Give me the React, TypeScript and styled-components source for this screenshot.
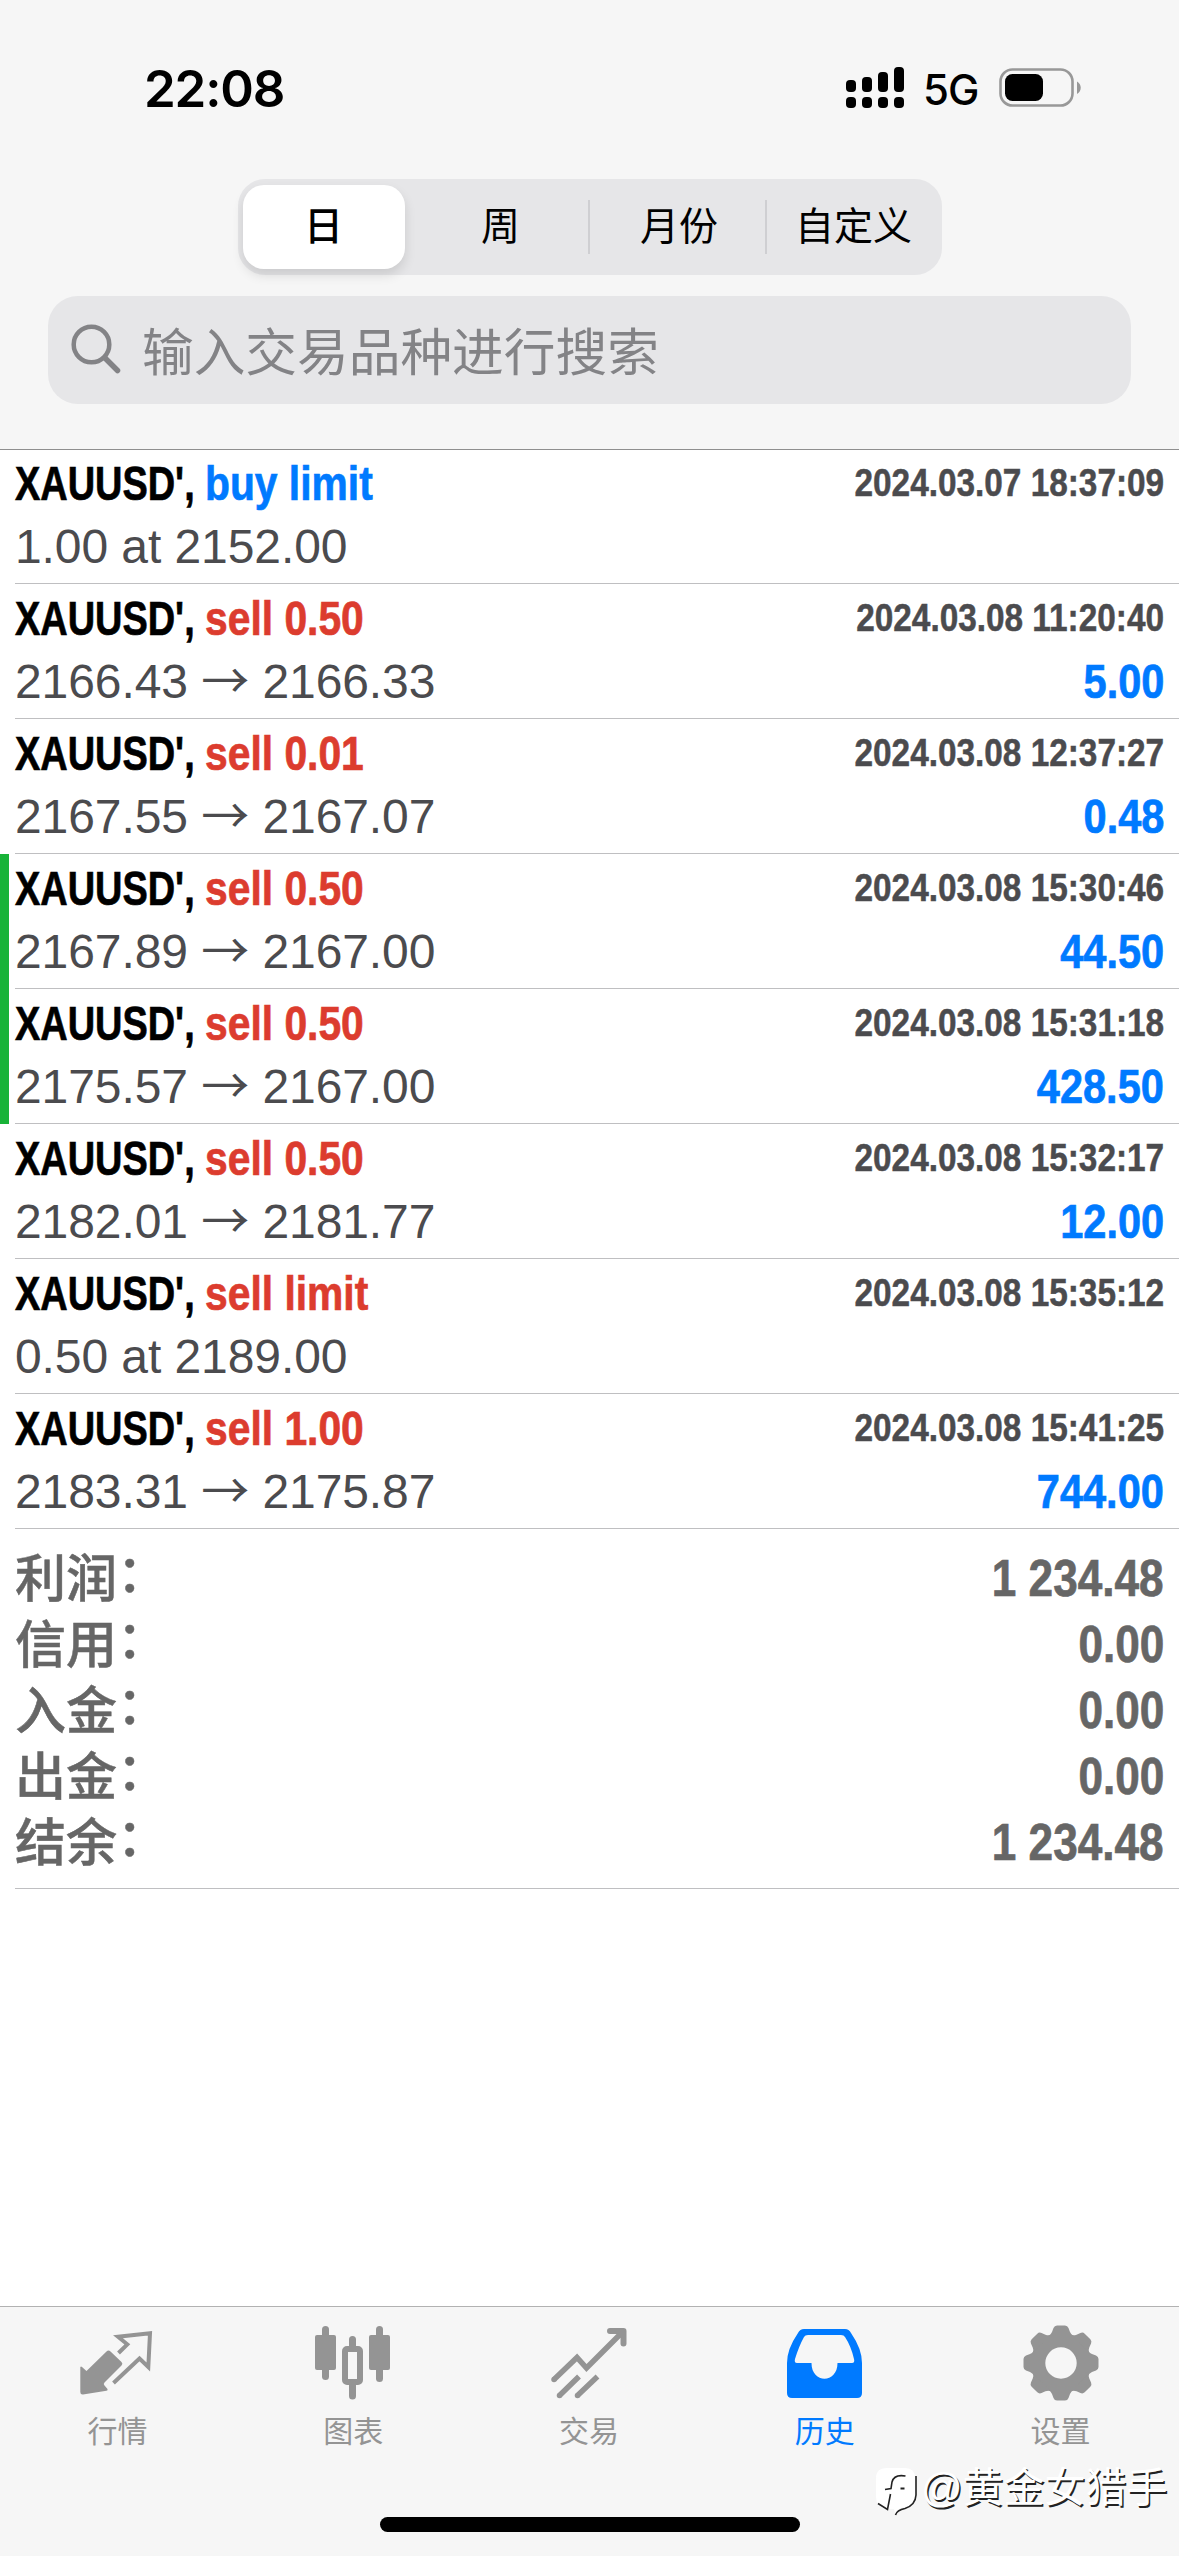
import React from "react";
import styled, { createGlobalStyle } from "styled-components";

const SANS = '"Liberation Sans", "Noto Sans CJK SC", sans-serif';
const CJK = '"Noto Sans CJK SC", sans-serif';

const GlobalStyle = createGlobalStyle`
  * { box-sizing: border-box; }
  body { margin: 0; background: #fff; }
`;

const Screen = styled.div`
  width: 1179px;
  height: 2556px;
  display: flex;
  flex-direction: column;
  background: #fff;
  font-family: ${SANS};
  position: relative;
  overflow: hidden;
`;

const Header = styled.header`
  height: 450px;
  flex: none;
  display: flex;
  flex-direction: column;
  align-items: center;
  background: #f6f6f6;
  border-bottom: 1px solid #8f8f8f;
`;

const StatusBar = styled.div`
  width: 100%;
  height: 179px;
  flex: none;
  display: flex;
  justify-content: space-between;
  padding: 56px 97px 0 144px;
`;

const Clock = styled.div`
  font: 600 51px/65px Inter, sans-serif;
  letter-spacing: -1.2px;
  color: #000;
`;

const StatusIcons = styled.div`
  display: flex;
  height: 64px;
  align-items: flex-start;
`;

const Network = styled.span`
  width: 95px;
  font: 500 42px/68px Inter, sans-serif;
  letter-spacing: -1px;
  padding-left: 19px;
`;

const Segments = styled.div`
  width: 704px;
  height: 96px;
  flex: none;
  display: flex;
  align-items: center;
  padding: 0 6px 0 5px;
  border-radius: 27px;
  background: #e6e6e8;
`;

const Segment = styled.div<{ $width: number; $shift?: number; $active?: boolean; $divider?: boolean }>`
  width: ${(p) => p.$width}px;
  height: ${(p) => (p.$active ? 84 : 54)}px;
  display: flex;
  align-items: center;
  justify-content: center;
  padding-left: ${(p) => p.$shift ?? 0}px;
  font: ${(p) => (p.$active ? 500 : 400)} 39px/48px ${SANS};
  color: #000;
  border-radius: ${(p) => (p.$active ? 21 : 0)}px;
  background: ${(p) => (p.$active ? "#fff" : "transparent")};
  box-shadow: ${(p) => (p.$active ? "0 6px 12px rgba(0,0,0,.12)" : "none")};
  border-right: ${(p) => (p.$divider ? "2px solid #cfcfd2" : "none")};
`;

const SearchField = styled.div`
  width: 1083px;
  height: 108px;
  margin-top: 21px;
  display: flex;
  align-items: center;
  gap: 19px;
  padding: 0 0 2px 23px;
  border-radius: 30px;
  background: #e6e6e8;
  color: #838386;
  font: 400 51.7px/72px ${CJK};
  svg { position: relative; top: 1px; }
`;

const Deals = styled.main`
  display: flex;
  flex-direction: column;
  flex: 1;
`;

const DealRow = styled.article<{ $marked?: boolean }>`
  height: 135px;
  display: flex;
  border-left: 9px solid ${(p) => (p.$marked ? "#18b338" : "transparent")};
  &:first-child { height: 134px; }
  &:first-child > div { padding-top: 2px; }
`;

const DealBody = styled.div`
  flex: 1;
  margin-left: 6px;
  padding: 3px 15px 0 0;
  border-bottom: 1px solid #bfbfc1;
`;

const Line = styled.div`
  height: 63px;
  display: flex;
  justify-content: space-between;
  line-height: 63px;
  white-space: pre;
`;

const Title = styled.div`
  display: flex;
  font-size: 48px;
  font-weight: 700;
  -webkit-text-stroke: 0.7px currentColor;
`;

const Symbol = styled.span`
  width: 190px;
  color: #000;
  transform: scaleX(0.79);
  transform-origin: left;
`;

const Action = styled.span<{ $buy?: boolean }>`
  color: ${(p) => (p.$buy ? "#007aff" : "#dc3c2e")};
  transform: scaleX(0.85);
  transform-origin: left;
`;

const Stamp = styled.span`
  font-size: 39px;
  font-weight: 700;
  line-height: 62px;
  color: #4b4b4e;
  -webkit-text-stroke: 0.5px currentColor;
  transform: scaleX(0.855);
  transform-origin: right;
`;

const Prices = styled.span`
  font-size: 48px;
  letter-spacing: -0.08px;
  color: #4b4b4e;
`;

const Arrow = styled.span`
  font-family: ${CJK};
  line-height: 0;
`;

const Profit = styled.span`
  font-size: 48px;
  font-weight: 700;
  color: #007aff;
  -webkit-text-stroke: 0.7px currentColor;
  transform: scaleX(0.865);
  transform-origin: right;
`;

const Summary = styled.section`
  height: 360px;
  margin-left: 15px;
  padding: 17px 15px 0 0;
  border-bottom: 1px solid #bfbfc1;
`;

const SummaryLine = styled.div`
  height: 66px;
  display: flex;
  justify-content: space-between;
  font-size: 51px;
  line-height: 66px;
  color: #666;
`;

const SummaryLabel = styled.span`
  font-weight: 500;
  line-height: 68px;
  -webkit-text-stroke: 0.5px currentColor;
`;

const Colon = styled.span`
  vertical-align: 5px;
  line-height: 0;
`;

const SummaryValue = styled.span`
  font-weight: 700;
  -webkit-text-stroke: 0.7px currentColor;
  transform: scaleX(0.865);
  transform-origin: right;
`;

const TabBar = styled.nav`
  height: 250px;
  flex: none;
  display: grid;
  grid-template-columns: repeat(5, 1fr);
  background: #f6f6f6;
  border-top: 1px solid #b2b2b2;
`;

const Tab = styled.div<{ $active?: boolean }>`
  display: flex;
  flex-direction: column;
  align-items: center;
  padding: 18px 1px 0 0;
  color: ${(p) => (p.$active ? "#007aff" : "#949494")};
  font: 400 30px/40px ${SANS};
  svg { display: block; margin-bottom: 11px; }
`;

const HomeIndicator = styled.div`
  position: absolute;
  left: 380px;
  bottom: 24px;
  width: 420px;
  height: 15px;
  border-radius: 8px;
  background: #000;
`;

const Watermark = styled.div`
  position: absolute;
  left: 874px;
  top: 2465px;
  display: flex;
  align-items: flex-start;
  gap: 2px;
  color: #fff;
  font: 400 41px/47px ${SANS};
  text-shadow: 1.5px 1.5px 0 #222;
`;

const SignalIcon = () => (
  <svg width="58" height="64" viewBox="0 0 58 64">
    {[0, 1, 2, 3].map((i) => {
      const top = [24, 21, 16, 11][i];
      return (
        <g key={i}>
          <rect x={i * 16} y={top} width="10" height={36 - top} rx="4" />
          <rect x={i * 16} y="41" width="10" height="11" rx="4" />
        </g>
      );
    })}
  </svg>
);

const BatteryIcon = () => (
  <svg width="83" height="64" viewBox="0 0 83 64">
    <rect x="1.5" y="13.5" width="72" height="36" rx="12" fill="none" stroke="#989898" strokeWidth="2.6" />
    <rect x="6" y="18" width="38" height="27" rx="7.5" />
    <path d="M78 25.5c5 2.5 5 10 0 12.5z" fill="#989898" />
  </svg>
);

const SearchIcon = () => (
  <svg width="52" height="52" viewBox="0 0 52 52" fill="none" stroke="#838386" strokeWidth="4.500" strokeLinecap="round">
    <circle cx="20.500" cy="20.500" r="17.800" />
    <path d="M34 34 46.500 46.500" strokeWidth="5.500" />
  </svg>
);

const QuotesIcon = () => (
  <svg width="76" height="76" viewBox="0 0 76 76">
    <path
      d="M1.300 42Q2 41 3 42L7.500 46 27.500 26.500Q29.500 24.500 31.500 26.500L42.500 37Q44.300 38.800 42.500 40.500L25.500 57.500Q24 59 25.500 60.500L28.500 64Q29 65.500 27.500 65.700L4 69.500Q1.300 69.700 1.300 67Z"
      fill="currentColor"
    />
    <path
      d="M39.500 28 48.300 19.300 39 11.700 71 8.300 69.300 42 60.500 33.500 34.500 58"
      fill="none"
      stroke="currentColor"
      strokeWidth="4"
    />
  </svg>
);

const ChartIcon = () => (
  <svg width="76" height="76" viewBox="0 0 76 76" fill="currentColor">
    <rect x="0" y="10" width="21" height="35" rx="2" />
    <rect x="7" y="1" width="7" height="54" rx="3.500" />
    <rect x="54" y="10" width="21" height="35" rx="2" />
    <rect x="61" y="1" width="7" height="56" rx="3.500" />
    <rect x="30" y="24" width="15" height="33" rx="2" fill="none" stroke="currentColor" strokeWidth="6" />
    <path d="M37.500 14.500v8M37.500 58v13" stroke="currentColor" strokeWidth="7" strokeLinecap="round" />
  </svg>
);

const TradeIcon = () => (
  <svg width="76" height="76" viewBox="0 0 76 76" fill="none" stroke="currentColor" strokeWidth="5.500" strokeLinejoin="miter">
    <path d="M3 54.500 26 32.500 35.500 43 72 6.500" />
    <path d="M59 6H72.500V18.500" strokeLinecap="round" strokeLinejoin="round" strokeWidth="6" />
    <path d="M64 7H72V15Z" fill="currentColor" stroke="none" />
    <path d="M8.500 70.500 28 51.500M26.500 70.500 46.500 51.500" />
    <g fill="currentColor" stroke="none">
      <circle cx="3" cy="54.500" r="2.750" />
      <circle cx="8.500" cy="70.500" r="2.750" />
      <circle cx="26.500" cy="70.500" r="2.750" />
    </g>
  </svg>
);

const HistoryIcon = () => (
  <svg width="76" height="76" viewBox="0 0 76 76" fill="currentColor">
    <path
      fillRule="evenodd"
      d="M11 8Q13 4 17 4H58Q62 4 64 8 75 24 75 38V68Q75 73 70 73H5Q0 73 0 68V38Q0 24 11 8ZM17 12Q12 21 8 34 7 38 10 38H24.500C24.500 59 50.500 59 50.500 38H65Q68 38 67 34 64 21 58 12 57 10 54 10H21Q18 10 17 12Z"
    />
  </svg>
);

const GearIcon = () => (
  <svg width="76" height="76" viewBox="-38 -38 76 76" fill="currentColor">
    <path
      fillRule="evenodd"
      d="M-30 0A30 30 0 1 0 30 0A30 30 0 1 0 -30 0ZM-15.700 0A15.700 15.700 0 1 1 15.700 0A15.700 15.700 0 1 1 -15.700 0Z"
    />
    {[0, 45, 90, 135, 180, 225, 270, 315].map((a) => (
      <path key={a} transform={`rotate(${a})`} d="M-12.500 -27Q-10 -28.500-9 -31L-7.500 -35Q-6.500 -37.500-4 -37.500H4Q6.500 -37.500 7.500 -35L9 -31Q10 -28.500 12.500 -27Z" />
    ))}
  </svg>
);

const WatermarkLogo = () => (
  <svg width="45" height="54" viewBox="-2 -2 45 54">
    <path d="M11 1H29Q39 1 39 11V28Q39 39 28 40Q21 42 19 47L18 42H11Q0 40 0 30V11Q0 1 11 1Z" fill="#fff" />
    <g fill="none" stroke="#222" strokeWidth="1.600">
      <path d="M29.500 9Q18 7 16 15L15 21.500 9 22.500" />
      <path d="M24.500 21.500H28.500" strokeWidth="2" />
      <path d="M14.500 27 11.500 42.500 2 36.500" />
      <path d="M40 9V28Q39.500 38 29 41.500 21 43 19.500 48" />
    </g>
  </svg>
);

interface Deal {
  action: string;
  buy?: boolean;
  time: string;
  from: string;
  to?: string;
  profit?: string;
  marked?: boolean;
}

const deals: Deal[] = [
  { action: "buy limit", buy: true, time: "2024.03.07 18:37:09", from: "1.00 at 2152.00" },
  { action: "sell 0.50", time: "2024.03.08 11:20:40", from: "2166.43", to: "2166.33", profit: "5.00" },
  { action: "sell 0.01", time: "2024.03.08 12:37:27", from: "2167.55", to: "2167.07", profit: "0.48" },
  { action: "sell 0.50", time: "2024.03.08 15:30:46", from: "2167.89", to: "2167.00", profit: "44.50", marked: true },
  { action: "sell 0.50", time: "2024.03.08 15:31:18", from: "2175.57", to: "2167.00", profit: "428.50", marked: true },
  { action: "sell 0.50", time: "2024.03.08 15:32:17", from: "2182.01", to: "2181.77", profit: "12.00" },
  { action: "sell limit", time: "2024.03.08 15:35:12", from: "0.50 at 2189.00" },
  { action: "sell 1.00", time: "2024.03.08 15:41:25", from: "2183.31", to: "2175.87", profit: "744.00" },
];

const totals = [
  ["利润", "1 234.48"],
  ["信用", "0.00"],
  ["入金", "0.00"],
  ["出金", "0.00"],
  ["结余", "1 234.48"],
];

const tabs = [
  { label: "行情", Icon: QuotesIcon },
  { label: "图表", Icon: ChartIcon },
  { label: "交易", Icon: TradeIcon },
  { label: "历史", Icon: HistoryIcon, active: true },
  { label: "设置", Icon: GearIcon },
];

export default function App() {
  return (
    <>
      <GlobalStyle />
      <Screen>
        <Header>
          <StatusBar>
            <Clock>22:08</Clock>
            <StatusIcons>
              <SignalIcon />
              <Network>5G</Network>
              <BatteryIcon />
            </StatusIcons>
          </StatusBar>
          <Segments>
            <Segment $width={162} $active>日</Segment>
            <Segment $width={185} $shift={9} $divider>周</Segment>
            <Segment $width={177} $shift={4} $divider>月份</Segment>
            <Segment $width={169} $shift={5}>自定义</Segment>
          </Segments>
          <SearchField>
            <SearchIcon />
            输入交易品种进行搜索
          </SearchField>
        </Header>
        <Deals>
          {deals.map((d) => (
            <DealRow key={d.time} $marked={d.marked}>
              <DealBody>
                <Line>
                  <Title>
                    <Symbol>XAUUSD',</Symbol>
                    <Action $buy={d.buy}>{d.action}</Action>
                  </Title>
                  <Stamp>{d.time}</Stamp>
                </Line>
                <Line>
                  <Prices>
                    {d.from}
                    {d.to && (
                      <>
                        {" "}
                        <Arrow>→</Arrow> {d.to}
                      </>
                    )}
                  </Prices>
                  {d.profit && <Profit>{d.profit}</Profit>}
                </Line>
              </DealBody>
            </DealRow>
          ))}
          <Summary>
            {totals.map(([label, value]) => (
              <SummaryLine key={label}>
                <SummaryLabel>
                  {label}
                  <Colon>：</Colon>
                </SummaryLabel>
                <SummaryValue>{value}</SummaryValue>
              </SummaryLine>
            ))}
          </Summary>
        </Deals>
        <TabBar>
          {tabs.map(({ label, Icon, active }) => (
            <Tab key={label} $active={active}>
              <Icon />
              {label}
            </Tab>
          ))}
        </TabBar>
        <HomeIndicator />
        <Watermark>
          <WatermarkLogo />
          <span>@黄金女猎手</span>
        </Watermark>
      </Screen>
    </>
  );
}
